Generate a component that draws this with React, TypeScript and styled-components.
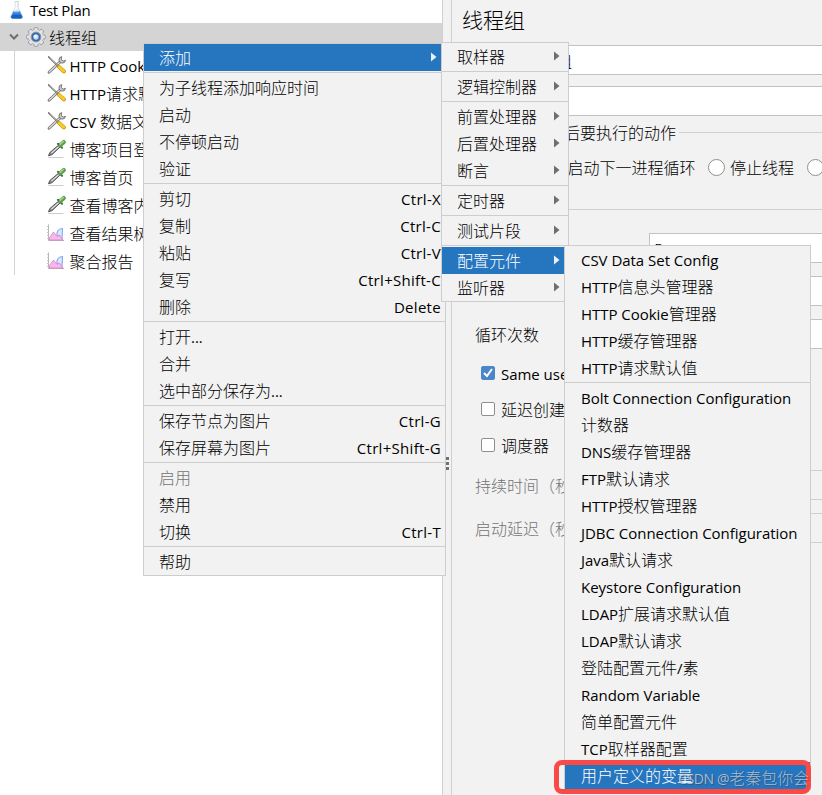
import React from "react";
import styled, { createGlobalStyle, css } from "styled-components";

const Global = createGlobalStyle`
  * { box-sizing: border-box; }
  html, body { margin: 0; padding: 0; overflow: hidden; background: #f2f2f2; }
  body { font: 16px/27px "Noto Sans CJK SC", sans-serif; color: #000; font-weight: 300; }
`;

const Window = styled.div`
  position: relative;
  display: flex;
  width: 822px;
  height: 795px;
  overflow: hidden;
  background: #f2f2f2;
`;

/* ---------- text ---------- */
const Run = styled.span`white-space: pre;`;
const Latin = styled.span`
  font-family: "Open Sans", "Noto Sans", sans-serif;
  font-weight: 400;
  font-size: 15px;
  letter-spacing: -0.03px;
  line-height: 1;
`;
function Label({ children }: { children: string }) {
  const parts = children.match(/[\x20-\x7e]+|[^\x20-\x7e]+/g) ?? [];
  return (
    <Run>
      {parts.map((p, i) => (/^[\x20-\x7e]/.test(p) ? <Latin key={i}>{p}</Latin> : p))}
    </Run>
  );
}

/* ---------- tree ---------- */
const Tree = styled.div`
  width: 442px;
  flex: none;
  background: #fff;
  overflow: hidden;
`;
const TreeRow = styled.div<{ $pad: number; $h: number; $selected?: boolean; $gap?: number; $lift?: number }>`
  display: flex;
  align-items: center;
  gap: ${(p) => p.$gap ?? 4}px;
  height: ${(p) => p.$h}px;
  padding-left: ${(p) => p.$pad}px;
  padding-bottom: ${(p) => p.$lift ?? 0}px;
  background: ${(p) => (p.$selected ? "#d4d4d4" : "transparent")};
  svg { flex: none; }
`;
const PlanRow = styled(TreeRow)`
  ${Latin} { letter-spacing: -0.35px; }
`;
const Children = styled.div`
  margin-left: 14px;
  border-left: 1px solid #d4d4d4;
  height: 224px;
`;

const Flask = () => (
  <svg width="18" height="20" viewBox="0 0 18 20">
    <path d="M6.800 1.500h3.800M7.200 1.500v6L2.800 16.200q-.8 2.200 1.200 2.300h9.400q2-.1 1.200-2.300L10.200 7.500v-6z" fill="#eef3f8" stroke="#c9d2da" strokeWidth=".8" />
    <path d="M5.600 11 3 16.500q-.6 1.800 1.200 1.900h9q1.800-.1 1.200-1.900L11.700 11z" fill="#3c8be0" />
    <path d="M4.500 14.500 3.200 17q0 1.400 1.500 1.400h8q1.500 0 1.500-1.400l-1.300-2.500z" fill="#1563c0" />
    <path d="M8.200 2v6l-2 4" stroke="#fff" fill="none" />
    <ellipse cx="8.700" cy="11.300" rx="2.600" ry=".9" fill="#9fcbf5" />
  </svg>
);
const Chevron = () => (
  <svg width="12" height="10" viewBox="0 0 12 10">
    <path d="M2 2.500 6 6.500l4-4" fill="none" stroke="#6e6e6e" strokeWidth="2" />
  </svg>
);
const Gear = () => (
  <svg width="20" height="20" viewBox="0 0 20 20">
    <g stroke="#8d8d8d" strokeWidth=".8" fill="#e4e4e4">
      {[0, 45, 90, 135].map((a) => (
        <rect key={a} x="7.900" y=".6" width="4.200" height="18.800" rx="1.300" transform={`rotate(${a} 10 10)`} />
      ))}
    </g>
    <circle cx="10" cy="10" r="7.300" fill="#e2e2e2" />
    <circle cx="10" cy="10" r="4.900" fill="#3467a8" stroke="#8d9db3" />
    <circle cx="10" cy="10" r="2.700" fill="#c4daf0" />
    <circle cx="9.400" cy="9.300" r="1.500" fill="#f1f7fc" />
  </svg>
);
const Tools = () => (
  <svg width="20" height="20" viewBox="0 0 20 20">
    <path d="M2 17.200 13.500 6.500" stroke="#6f6f6f" strokeWidth="2.800" strokeLinecap="round" />
    <path d="M2.200 17 13 7" stroke="#e0e0e0" strokeWidth="1.200" strokeLinecap="round" />
    <path d="M14.700 1.600a3.300 3.300 0 1 0 3.800 3.600l-2.300.9-1.800-1.500z" fill="#c6c6c6" stroke="#666" strokeWidth=".8" />
    <path d="M1.700 2 11 11" stroke="#666" strokeWidth="1.700" strokeLinecap="round" />
    <path d="M2.300 2.500 10.500 10.300" stroke="#ccc" strokeWidth=".6" />
    <path d="m12 11.900 5 4.600" stroke="#c8950c" strokeWidth="3.900" strokeLinecap="round" />
    <path d="m12.300 12 4.500 4.200" stroke="#f9cc25" strokeWidth="2.700" strokeLinecap="round" />
  </svg>
);
const Dropper = () => (
  <svg width="20" height="20" viewBox="0 0 20 20">
    <path d="M1.500 18.500h15" stroke="#ccc" />
    <path d="m1.500 16.800 1.300-3.300 8.700-7.300 1.700 1.700-8.200 7.800z" fill="#8a8d8b" stroke="#494d4b" strokeWidth=".9" />
    <path d="m4.300 14.200 7.200-6.400" stroke="#e6e9e7" strokeWidth="1.100" />
    <path d="m11 4.800 4 4" stroke="#47713f" strokeWidth="2.200" strokeLinecap="round" />
    <path d="m13.500 6 3.300-2.900" stroke="#5fa04d" strokeWidth="4.200" strokeLinecap="round" />
    <path d="m13.300 5.200 3-2.700" stroke="#a0d28f" strokeWidth="1.600" strokeLinecap="round" />
  </svg>
);
const Graph = () => (
  <svg width="20" height="20" viewBox="0 0 20 20">
    <path d="M1.500 1.500v16h15.500" fill="none" stroke="#b4b4b4" />
    <path d="M0 3.500h1.500M0 6.500h1.500M0 9.500h1.500M0 12.500h1.500M0 15.500h1.500" stroke="#c8c8c8" />
    <path d="M15.500 5.500c-4.500.3-6 3.500-5.500 7l2 1 3 3.500z" fill="#d9e9ff" stroke="#7fabe8" strokeWidth="1.100" />
    <path d="M2.500 14.500 6.500 9l3.500 4.500 2.500-1.500 3.500 5H2.500z" fill="#f8b8ec" stroke="#e27bc6" strokeWidth=".8" />
  </svg>
);

const children: [React.FC, string][] = [
  [Tools, "HTTP Cookie管理器"],
  [Tools, "HTTP请求默认值"],
  [Tools, "CSV 数据文件设置"],
  [Dropper, "博客项目登录"],
  [Dropper, "博客首页"],
  [Dropper, "查看博客内容"],
  [Graph, "查看结果树"],
  [Graph, "聚合报告"],
];

/* ---------- splitter and form ---------- */
const Splitter = styled.div`
  width: 10px;
  flex: none;
  border: solid #d0d0d0;
  border-width: 0 1px;
  display: flex;
  flex-direction: column;
  align-items: center;
  padding-top: 457px;
  gap: 2px;
`;
const Dot = styled.i`width: 3px; height: 3px; background: #707070;`;
const Form = styled.div`flex: 1; min-width: 0; overflow: hidden;`;
const Heading = styled.h1`
  margin: 0;
  padding-left: 10px;
  height: 45px;
  font: 300 21px/39px "Noto Sans CJK SC", sans-serif;
`;
const Field = styled.div<{ $left: number; $top?: number; $disabled?: boolean }>`
  margin: ${(p) => p.$top ?? 0}px 0 0 ${(p) => p.$left}px;
  height: 30px;
  padding-left: 4px;
  border: 1px solid ${(p) => (p.$disabled ? "#cfcfcf" : "#c2c2c2")};
  border-right: 0;
  background: ${(p) => (p.$disabled ? "#f2f2f2" : "#fff")};
  line-height: 30px;
`;
const GroupTitle = styled.div`
  display: flex;
  align-items: center;
  height: 27px;
  margin-top: 3px;
  padding-left: 16px;
  &::after { content: ""; flex: 1; height: 1px; margin-left: 3px; background: #d0d0d0; }
`;
const Radios = styled.div`
  display: flex;
  align-items: center;
  height: 64px;
  padding: 0 0 21px 27px;
  border-bottom: 1px solid #d0d0d0;
`;
const Radio = styled.span`
  display: flex;
  align-items: center;
  flex: none;
  gap: 5px;
  margin-right: 12.5px;
  &::before { content: ""; width: 15px; height: 15px; border: 1px solid #8f8f8f; border-radius: 50%; background: #fff; }
`;
const Line = styled.div<{ $h: number; $muted?: boolean }>`
  display: flex;
  align-items: center;
  height: ${(p) => p.$h}px;
  padding-left: 23px;
  color: ${(p) => (p.$muted ? "#737373" : "#000")};
  white-space: nowrap;
`;
const CheckLine = styled(Line)`padding-left: 29px; gap: 6px;`;
const Box = styled.span<{ $on?: boolean }>`
  display: flex;
  flex: none;
  width: 14px;
  height: 14px;
  border: 1px solid ${(p) => (p.$on ? "#4a86c8" : "#8f8f8f")};
  border-radius: 2px;
  background: ${(p) => (p.$on ? "#4a86c8" : "#fff")};
`;
const LabelColumn = styled.div`
  width: 112px;
  padding-top: 110px;
  overflow: hidden;
`;
const FieldColumn = styled.div`display: flex; flex-direction: column;`;
const Split = styled.div`
  display: grid;
  grid-template-columns: 197px 1fr;
`;

/* ---------- menus ---------- */
const Menu = styled.div<{ $x: number; $y: number; $w: number }>`
  position: absolute;
  left: ${(p) => p.$x}px;
  top: ${(p) => p.$y}px;
  width: ${(p) => p.$w}px;
  border: 1px solid #cdcdcd;
  background: #f2f2f2;
`;
const Item = styled.div<{ $on?: boolean; $off?: boolean; $left: number; $right: number }>`
  display: flex;
  align-items: center;
  justify-content: space-between;
  height: 27px;
  padding: 0 ${(p) => p.$right}px 0 ${(p) => p.$left}px;
  white-space: nowrap;
  ${(p) => p.$off && css`color: #737373;`}
  ${(p) => p.$on && css`background: #2675bf; color: #fff;`}
`;
const Shortcut = styled.span`
  ${Latin} { letter-spacing: 0.3px; }
`;
const Separator = styled.hr`
  margin: 1px 0;
  border: 0;
  height: 1px;
  background: #cdcdcd;
`;
const Arrow = () => (
  <svg width="6" height="10" viewBox="0 0 6 10">
    <path d="M0 .5 5.500 5 0 9.500z" fill="currentColor" />
  </svg>
);
const ArrowSlot = styled.span<{ $on?: boolean }>`
  display: flex;
  margin-top: -1px;
  color: ${(p) => (p.$on ? "#e8f0f8" : "#6e6e6e")};
`;
const Callout = styled.div`
  position: absolute;
  left: 554px;
  top: 760px;
  width: 257px;
  height: 34px;
  border: 5px solid #fa4a47;
  border-radius: 8px;
`;
const Watermark = styled.div`
  position: absolute;
  left: 678px;
  top: 764px;
  color: rgba(205, 215, 225, 0.75);
  text-shadow: 1px 1px 1px rgba(60, 60, 60, 0.5);
  white-space: nowrap;
  ${Latin} { font-size: 14px; letter-spacing: -0.35px; }
`;

type Entry = null | { t: string; key?: string; sub?: boolean; on?: boolean; off?: boolean };
const list = (...t: string[]): Entry[] => t.map((s) => ({ t: s }));

const contextMenu: Entry[] = [
  { t: "添加", sub: true, on: true }, null,
  ...list("为子线程添加响应时间", "启动", "不停顿启动", "验证"), null,
  { t: "剪切", key: "Ctrl-X" }, { t: "复制", key: "Ctrl-C" }, { t: "粘贴", key: "Ctrl-V" },
  { t: "复写", key: "Ctrl+Shift-C" }, { t: "删除", key: "Delete" }, null,
  ...list("打开...", "合并", "选中部分保存为..."), null,
  { t: "保存节点为图片", key: "Ctrl-G" }, { t: "保存屏幕为图片", key: "Ctrl+Shift-G" }, null,
  { t: "启用", off: true }, { t: "禁用" }, { t: "切换", key: "Ctrl-T" }, null,
  { t: "帮助" },
];
const addMenu: Entry[] = [
  { t: "取样器", sub: true }, null, { t: "逻辑控制器", sub: true }, null,
  { t: "前置处理器", sub: true }, { t: "后置处理器", sub: true }, { t: "断言", sub: true }, null,
  { t: "定时器", sub: true }, null, { t: "测试片段", sub: true }, null,
  { t: "配置元件", sub: true, on: true }, { t: "监听器", sub: true },
];
const configMenu: Entry[] = [
  ...list("CSV Data Set Config", "HTTP信息头管理器", "HTTP Cookie管理器", "HTTP缓存管理器", "HTTP请求默认值"), null,
  ...list("Bolt Connection Configuration", "计数器", "DNS缓存管理器", "FTP默认请求", "HTTP授权管理器",
    "JDBC Connection Configuration", "Java默认请求", "Keystore Configuration", "LDAP扩展请求默认值",
    "LDAP默认请求", "登陆配置元件/素", "Random Variable", "简单配置元件", "TCP取样器配置"),
  { t: "用户定义的变量", on: true },
];

function MenuItems({ entries, left = 15, right, arrow = 8 }: { entries: Entry[]; left?: number; right: number; arrow?: number }) {
  return (
    <>
      {entries.map((e, i) =>
        e === null ? (
          <Separator key={i} />
        ) : (
          <Item key={i} $on={e.on} $off={e.off} $left={left} $right={e.sub ? arrow : right}>
            <Label>{e.t}</Label>
            {e.key && <Shortcut><Label>{e.key}</Label></Shortcut>}
            {e.sub && <ArrowSlot $on={e.on}><Arrow /></ArrowSlot>}
          </Item>
        )
      )}
    </>
  );
}

export default function App() {
  return (
    <Window>
      <Global />
      <Tree>
        <PlanRow $pad={8} $h={23} $gap={4} $lift={4}><Flask /><Label>Test Plan</Label></PlanRow>
        <TreeRow $pad={8} $h={28} $selected $gap={6}>
          <Chevron />
          <TreeRow $pad={0} $h={28} $gap={3}><Gear /><Label>线程组</Label></TreeRow>
        </TreeRow>
        <Children>
          {children.map(([Icon, text]) => (
            <TreeRow key={text} $pad={32} $h={28} $gap={2.5}><Icon /><Label>{text}</Label></TreeRow>
          ))}
        </Children>
      </Tree>
      <Splitter><Dot /><Dot /><Dot /></Splitter>
      <Form>
        <Heading>线程组</Heading>
        <Field $left={67}>线程组</Field>
        <Field $left={67} $top={11} />
        <GroupTitle>在取样器错误后要执行的动作</GroupTitle>
        <Radios>
          <Radio>继续</Radio><Radio>启动下一进程循环</Radio><Radio>停止线程</Radio><Radio />
        </Radios>
        <Split>
          <LabelColumn>
            <Line $h={29}>循环次数</Line>
            <CheckLine $h={48}>
              <Box $on>
                <svg width="12" height="12" viewBox="0 0 12 12"><path d="m2 6 3 3 5-7" fill="none" stroke="#fff" strokeWidth="2" /></svg>
              </Box>
              <Label>Same user on each iteration</Label>
            </CheckLine>
            <CheckLine $h={24}><Box />延迟创建线程直到需要</CheckLine>
            <CheckLine $h={48}><Box />调度器</CheckLine>
            <Line $h={32} $muted>持续时间（秒）</Line>
            <Line $h={54} $muted>启动延迟（秒）</Line>
          </LabelColumn>
          <FieldColumn>
            <Field $left={0} $top={23}>5</Field>
            <Field $left={0} $top={13} />
            <Field $left={0} $top={13} />
            <Field $left={0} $top={121} $disabled />
            <Field $left={0} $top={13} $disabled />
          </FieldColumn>
        </Split>
      </Form>
      <Menu $x={143} $y={43} $w={303}><MenuItems entries={contextMenu} right={4} arrow={8} /></Menu>
      <Menu $x={441} $y={42} $w={128}><MenuItems entries={addMenu} right={8} arrow={8} /></Menu>
      <Menu $x={564} $y={245} $w={247}><MenuItems entries={configMenu} left={16} right={8} /></Menu>
      <Callout />
      <Watermark><Label>CSDN @老秦包你会</Label></Watermark>
    </Window>
  );
}
